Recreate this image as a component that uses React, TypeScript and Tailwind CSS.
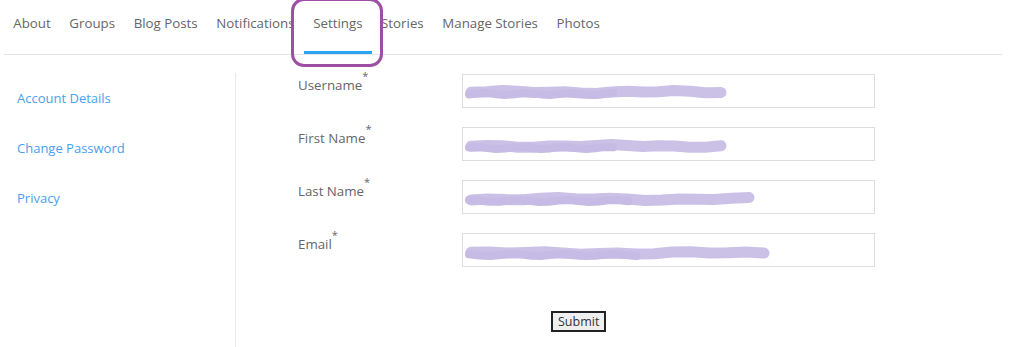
import React from "react";

const tabs = ["About", "Groups", "Blog Posts", "Notifications", "Settings", "Stories", "Manage Stories", "Photos"];

function Scribble({ width, y, seed }: { width: number; y: number; seed: number }) {
  const pts: string[] = [];
  const n = 16;
  for (let i = 0; i <= n; i++) {
    const x = 6 + (i / n) * (width - 12);
    const dy = Math.sin(i * 1.7 + seed) * 0.8 + Math.cos(i * 0.6 + seed * 2) * 0.8;
    pts.push(`${x.toFixed(1)},${(y + dy).toFixed(1)}`);
  }
  const pts2: string[] = [];
  for (let i = 0; i <= n; i++) {
    const x = 4 + (i / n) * (width * 0.55);
    const dy = Math.cos(i * 1.3 + seed) * 1.0 + 2;
    pts2.push(`${x.toFixed(1)},${(y + dy).toFixed(1)}`);
  }
  return (
    <svg width={width} height={34} className="absolute left-[2px] -top-px" viewBox={`0 0 ${width} 34`}>
      <polyline points={pts.join(" ")} fill="none" stroke="#cbc1e7" strokeWidth={11} strokeLinecap="round" strokeLinejoin="round" />
      <polyline points={pts2.join(" ")} fill="none" stroke="#c6bbe4" strokeWidth={8} strokeLinecap="round" strokeLinejoin="round" />
    </svg>
  );
}

const fields = [
  { label: "Username", w: 262, y: 18, seed: 1 },
  { label: "First Name", w: 262, y: 19, seed: 2 },
  { label: "Last Name", w: 290, y: 19, seed: 3 },
  { label: "Email", w: 305, y: 20, seed: 4 },
];

export default function App() {
  return (
    <div className="relative w-[1024px] h-[347px] bg-white overflow-hidden" style={{ fontFamily: '"Open Sans", "Noto Sans", sans-serif' }}>
      <div className="pl-[4px] w-[1002px]">
        <div className="flex h-[54px]">
          {tabs.map((t) => (
            <div
              key={t}
              className={`px-[9.3px] pt-[14px] text-[13.3px] leading-[19px] text-[#666] ${t === "Settings" ? "border-b-[3px] border-[#2ea3f2]" : ""}`}
            >
              {t}
            </div>
          ))}
        </div>
        <div className="h-px bg-[#e5e5e5]" />
      </div>

      <div className="flex mt-[18px]">
        <div className="w-[236px] pl-[17px] border-r border-[#e8e8e8] h-[300px] flex flex-col gap-[31px] pt-[16px] text-[13px] leading-[19px] text-[#4aa0ee]">
          <div>Account Details</div>
          <div>Change Password</div>
          <div>Privacy</div>
        </div>
        <div className="pl-[62px] pt-[1px]">
          <div className="flex flex-col gap-[19px]">
            {fields.map((f) => (
              <div key={f.label} className="flex h-[34px]">
                <div className="w-[164px] text-[13.3px] leading-[19px] text-[#666] pt-[2px]">
                  {f.label}
                  <sup className="relative -top-[10px] text-[11px] text-[#666]">*</sup>
                </div>
                <div className="relative w-[413px] h-[34px] border border-[#ddd] bg-white">
                  <Scribble width={f.w} y={f.y} seed={f.seed} />
                </div>
              </div>
            ))}
          </div>
          <div className="mt-[41px] pl-[253px]">
            <button className="h-[21px] px-[5px] border-2 border-[#222] bg-[#efefef] text-[12.5px] leading-[15px] text-[#333]">
              Submit
            </button>
          </div>
        </div>
      </div>

      <div className="absolute left-[291px] -top-[2px] w-[92px] h-[69px] border-[3px] border-[#9d4fa5] rounded-[13px]" />
    </div>
  );
}
